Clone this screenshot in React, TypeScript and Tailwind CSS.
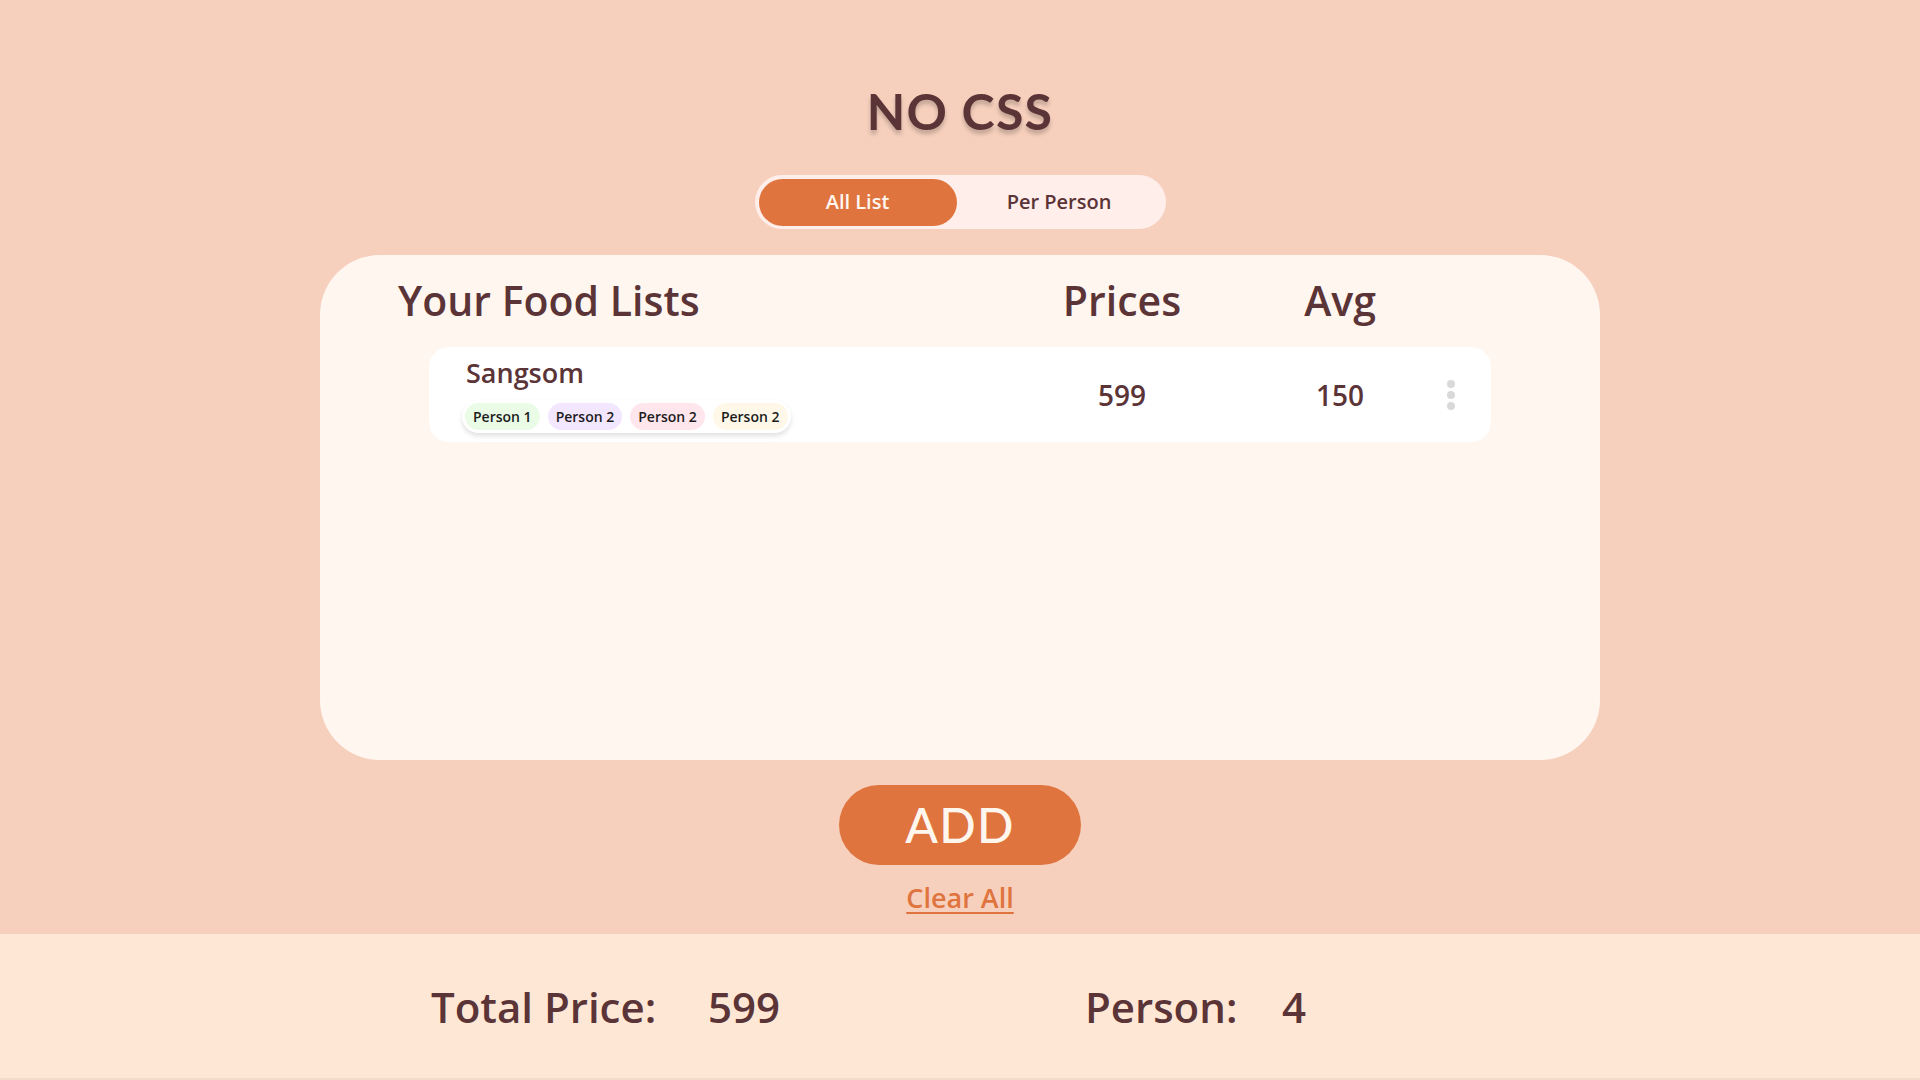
/**
 * App — food bill splitter screen: title, list/person toggle, food list card,
 * add / clear actions and the totals footer.
 */
import { useState } from "react";

const FONT = { fontFamily: "'Open Sans', 'Noto Sans', sans-serif" };
const LATO = { fontFamily: "Lato, 'Noto Sans', sans-serif" };

const TAGS = [
  { label: "Person 1", bg: "bg-[#EAFCE6]" },
  { label: "Person 2", bg: "bg-[#F3E6FF]" },
  { label: "Person 2", bg: "bg-[#FFE6EC]" },
  { label: "Person 2", bg: "bg-[#FFF8E8]" },
];

function Toggle() {
  const [tab, setTab] = useState<"all" | "person">("all");
  return (
    <div className="flex h-[54px] w-[411px] items-center rounded-full bg-[#FFEEEA] p-[4px]">
      <button
        onClick={() => setTab("all")}
        className={`h-[47px] w-[198px] rounded-full text-[20px] font-semibold ${
          tab === "all" ? "bg-[#DF743E] text-[#FFF6F0]" : "text-[#5B3437]"
        }`}
      >
        All List
      </button>
      <button
        onClick={() => setTab("person")}
        className={`h-[47px] flex-1 rounded-full text-[20px] font-semibold ${
          tab === "person" ? "bg-[#DF743E] text-[#FFF6F0]" : "text-[#5B3437]"
        }`}
      >
        Per Person
      </button>
    </div>
  );
}

function FoodRow() {
  return (
    <div className="mx-[109px] flex h-[95px] rounded-[20px] bg-white pl-[37px]">
      <div className="flex w-[576px] flex-col items-start pt-[12px]">
        <div className="text-[27px] font-semibold leading-none">Sangsom</div>
        <div className="mt-[14px] ml-[-4px] flex gap-[8px] rounded-full bg-white p-[3px] shadow-[0_3px_5px_rgba(0,0,0,0.12)]">
          {TAGS.map((t, i) => (
            <span
              key={i}
              className={`${t.bg} flex h-[27px] items-center rounded-full px-[8px] text-[14px] font-semibold text-[#1c1c1c]`}
            >
              {t.label}
            </span>
          ))}
        </div>
      </div>
      <div className="w-[160px] self-center text-center text-[28px] font-semibold">599</div>
      <div className="ml-[78px] w-[120px] self-center text-center text-[28px] font-semibold">150</div>
      <div className="ml-[47px] flex flex-col gap-[3px] self-center">
        <span className="h-[8px] w-[8px] rounded-full bg-[#D9D9D9]" />
        <span className="h-[8px] w-[8px] rounded-full bg-[#D9D9D9]" />
        <span className="h-[8px] w-[8px] rounded-full bg-[#D9D9D9]" />
      </div>
    </div>
  );
}

export default function App() {
  return (
    <div className="flex h-[1080px] w-full flex-col bg-[#F7D0BD] text-[#5B3437]" style={FONT}>
      {/* ── Main area ───────────────────────────── */}
      <div className="flex flex-1 flex-col items-center pt-[86px]">
        <h1
          className="text-[50px] font-bold leading-none tracking-wide [text-shadow:0_4px_4px_rgba(0,0,0,0.22)]"
          style={LATO}
        >
          NO CSS
        </h1>

        <div className="mt-[39px]">
          <Toggle />
        </div>

        {/* Food list card */}
        <div className="mt-[26px] h-[505px] w-[1280px] rounded-[60px] bg-[#FFF6F0] pt-[25px]">
          <div className="flex pl-[78px] text-[41px] font-semibold leading-none">
            <div className="w-[644px]">Your Food Lists</div>
            <div className="w-[160px] text-center">Prices</div>
            <div className="ml-[78px] w-[120px] text-center">Avg</div>
          </div>
          <div className="mt-[26px]">
            <FoodRow />
          </div>
        </div>

        <button
          className="mt-[25px] h-[80px] w-[242px] rounded-full bg-[#DF743E] text-[48px] font-medium tracking-wide text-[#FFF6EE]"
          style={LATO}
        >
          ADD
        </button>
        <button className="mt-[13px] text-[27px] font-semibold text-[#DF743E] underline underline-offset-4">
          Clear All
        </button>
      </div>

      {/* ── Totals footer ───────────────────────── */}
      <div className="flex h-[146px] items-center border-b-2 border-[#F3DCCB] bg-[#FFE7D6] pl-[431px] text-[42px] font-semibold">
        <span className="w-[277px]">Total Price:</span>
        <span className="w-[377px]">599</span>
        <span className="w-[197px]">Person:</span>
        <span>4</span>
      </div>
    </div>
  );
}
